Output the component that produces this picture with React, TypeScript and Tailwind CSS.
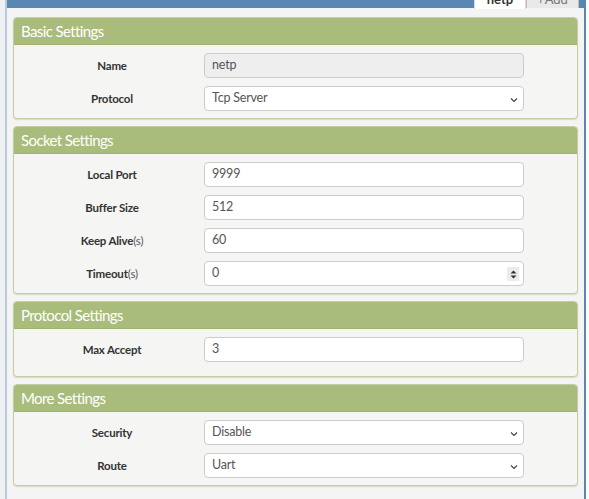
import React from "react";

const font = { fontFamily: 'Lato, "Liberation Sans", Arial, sans-serif' };

function Chevron() {
  return (
    <svg width="8" height="6" viewBox="0 0 8 6" className="absolute right-[5px] top-[10px]">
      <path d="M1 1.5 L4 4.5 L7 1.5" fill="none" stroke="#444" strokeWidth="1.2" />
    </svg>
  );
}

function Field({ value, kind }: { value: string; kind: "text" | "disabled" | "select" | "number" }) {
  const base =
    "relative w-[320px] h-[25px] rounded-[4px] border border-[#cccccc] pl-[7px] flex items-center text-[12.5px] tracking-[-0.2px] text-[#555]";
  const bg = kind === "disabled" ? "bg-[#eeeeee]" : "bg-white";
  return (
    <div className={`${base} ${bg}`}>
      <span>{value}</span>
      {kind === "select" && <Chevron />}
      {kind === "number" && (
        <div className="absolute right-[4px] top-[5px] w-[12px] h-[14px] bg-[#ececec] flex flex-col items-center justify-center gap-[1px]">
          <svg width="7" height="4" viewBox="0 0 7 4"><path d="M0.5 3.5 L3.5 0.5 L6.5 3.5 Z" fill="#333" /></svg>
          <svg width="7" height="4" viewBox="0 0 7 4"><path d="M0.5 0.5 L3.5 3.5 L6.5 0.5 Z" fill="#333" /></svg>
        </div>
      )}
    </div>
  );
}

function Row({ label, unit, value, kind }: { label: string; unit?: string; value: string; kind: "text" | "disabled" | "select" | "number" }) {
  return (
    <div className="flex items-center">
      <div className="w-[184px] ml-[6px] text-center text-[11.5px] tracking-[-0.2px] text-[#333]">
        <span className="font-bold">{label}</span>
        {unit && <span className="text-[#555]">{unit}</span>}
      </div>
      <Field value={value} kind={kind} />
    </div>
  );
}

function Panel({ title, children, pb = "pb-[7px]" }: { title: string; children: React.ReactNode; pb?: string }) {
  return (
    <div className="rounded-[4px] border border-[#c3cfa2] bg-[#f5f6f4] shadow-[0_1px_1px_rgba(160,175,120,0.35)]">
      <div className="h-[27px] bg-[#a9bc7b] rounded-t-[3px] border-b border-[#9fb370] px-[7px] flex items-center text-white text-[15px] tracking-[-0.6px]">
        {title}
      </div>
      <div className={`pt-[8px] ${pb} flex flex-col gap-[8px]`}>{children}</div>
    </div>
  );
}

export default function App() {
  return (
    <div className="w-[589px] h-[499px] flex bg-white overflow-hidden" style={font}>
      <div className="w-[5px] bg-[#eef0f1]" />
      <div className="w-[2px] bg-[#b7c9dd]" />
      <div className="flex-1 flex flex-col bg-[#f3f4f3]">
        <div className="h-[8px] bg-[#5a86b2] relative">
          <div className="absolute right-[5px] top-[-12px] flex">
            <div className="w-[52px] h-[21px] bg-white border border-[#d8d8d8] border-b-0 rounded-t-[4px] pt-[4px] text-center text-[13px] leading-[13px] font-bold text-[#333]">
              netp
            </div>
            <div className="w-[53px] h-[20px] bg-[#e9e9e9] border border-[#bdbdbd] border-b-0 rounded-t-[4px] pt-[4px] text-center text-[13px] leading-[13px] text-[#777]">
              +Add
            </div>
          </div>
        </div>
        <div className="px-[6px] pt-[9px] flex flex-col gap-[7px]">
          <Panel title="Basic Settings">
            <Row label="Name" value="netp" kind="disabled" />
            <Row label="Protocol" value="Tcp Server" kind="select" />
          </Panel>
          <Panel title="Socket Settings">
            <Row label="Local Port" value="9999" kind="text" />
            <Row label="Buffer Size" value="512" kind="text" />
            <Row label="Keep Alive" unit="(s)" value="60" kind="text" />
            <Row label="Timeout" unit="(s)" value="0" kind="number" />
          </Panel>
          <Panel title="Protocol Settings" pb="pb-[14px]">
            <Row label="Max Accept" value="3" kind="text" />
          </Panel>
          <Panel title="More Settings">
            <Row label="Security" value="Disable" kind="select" />
            <Row label="Route" value="Uart" kind="select" />
          </Panel>
        </div>
      </div>
      <div className="w-[2px] bg-[#5a86b2]" />
      <div className="w-[3px] bg-white" />
    </div>
  );
}
